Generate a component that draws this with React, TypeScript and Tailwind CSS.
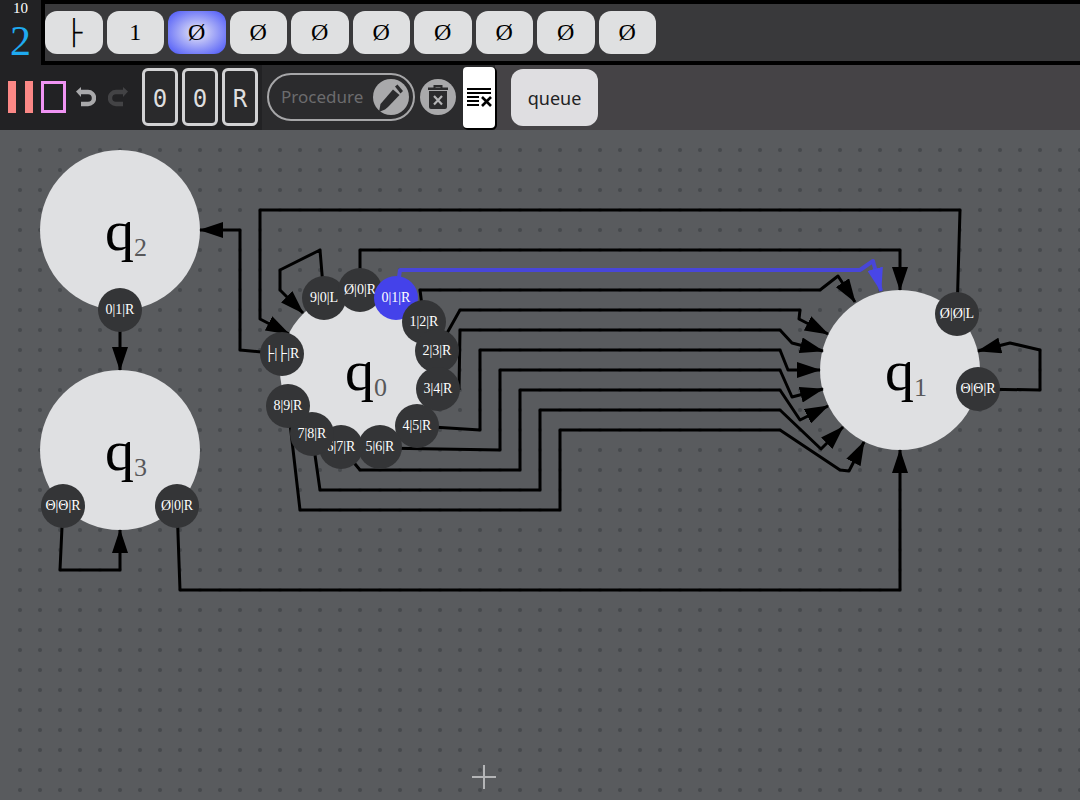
import React from "react";

type Chip = { id: string; label: string; x: number; y: number; active?: boolean };
type State = { id: string; index: number; x: number; y: number };
type Edge = { id: string; d: string; active?: boolean };

const tape = ["├", "1", "Ø", "Ø", "Ø", "Ø", "Ø", "Ø", "Ø", "Ø"];
const headIndex = 2;

const states: State[] = [
  { id: "q2", index: 2, x: 120, y: 100 },
  { id: "q0", index: 0, x: 360, y: 240 },
  { id: "q1", index: 1, x: 900, y: 240 },
  { id: "q3", index: 3, x: 120, y: 320 },
];

const chips: Chip[] = [
  { id: "q2-a", label: "0|1|R", x: 120, y: 180 },
  { id: "q3-a", label: "Θ|Θ|R", x: 63, y: 376 },
  { id: "q3-b", label: "Ø|0|R", x: 177, y: 376 },
  { id: "q0-start", label: "├|├|R", x: 282, y: 224 },
  { id: "q0-9", label: "9|0|L", x: 324, y: 168 },
  { id: "q0-e", label: "Ø|0|R", x: 360, y: 160 },
  { id: "q0-0", label: "0|1|R", x: 396, y: 168, active: true },
  { id: "q0-1", label: "1|2|R", x: 424, y: 192 },
  { id: "q0-2", label: "2|3|R", x: 437, y: 221 },
  { id: "q0-3", label: "3|4|R", x: 438, y: 259 },
  { id: "q0-4", label: "4|5|R", x: 417, y: 296 },
  { id: "q0-5", label: "5|6|R", x: 380, y: 317 },
  { id: "q0-6", label: "6|7|R", x: 341, y: 317 },
  { id: "q0-7", label: "7|8|R", x: 312, y: 304 },
  { id: "q0-8", label: "8|9|R", x: 288, y: 276 },
  { id: "q1-a", label: "Ø|Ø|L", x: 957, y: 184 },
  { id: "q1-b", label: "Θ|Θ|R", x: 978, y: 259 },
];

const edges: Edge[] = [
  { id: "start", d: "M281 224L240 220V100H200" },
  { id: "e9", d: "M324 168L320 120L280 140V160L303 183" },
  { id: "ee", d: "M360 160V120H900V160" },
  { id: "e1", d: "M424 192L420 160H820L838 146L855 172" },
  { id: "e2", d: "M437 221L460 180H800L799 189L828 204" },
  { id: "e3", d: "M459 260L460 200H780L792 213L823 221" },
  { id: "e4", d: "M417 296L480 300V220H780L788 240H820" },
  { id: "e5", d: "M379 318L500 320V240H780L792 267L823 259" },
  { id: "e6", d: "M341 317L360 340H520V260H780L800 290L828 276" },
  { id: "e7", d: "M312 304L320 360H540V280H780L821 319L843 297" },
  { id: "e8", d: "M288 276L300 380H560V300H780L840 340L849 341L864 312" },
  { id: "q1l", d: "M957 184L960 80H260V189L289 204" },
  { id: "q1r", d: "M977 259L1040 260V220L1010 213L978 221" },
  { id: "q2", d: "M120 180V240" },
  { id: "q3a", d: "M63 376L60 440H120V400" },
  { id: "q3b", d: "M177 376L180 460H900V320" },
  { id: "e0", d: "M396 168L400 140H860L873 131L881 161", active: true },
];

function TapeBar() {
  return (
    <header className="flex h-[65px] bg-[#222224]">
      <div className="flex w-[41px] shrink-0 flex-col items-center font-['Liberation_Serif',serif]">
        <span className="text-[15px] leading-[17px] text-white">10</span>
        <span className="text-[42px] leading-[48px] text-[#1faaf0]">2</span>
      </div>
      <div className="flex min-w-0 grow items-center overflow-hidden border-4 border-r-0 border-black bg-[#39393b]">
        <div className="grid w-[611px] shrink-0 grid-cols-10 gap-1">
          {tape.map((symbol, i) => (
            <button
              key={i}
              type="button"
              className={
                "h-[43px] rounded-xl pb-0.5 text-center font-['Liberation_Serif','DejaVu_Sans',serif] text-2xl text-black " +
                (i === headIndex
                  ? "bg-[radial-gradient(ellipse_at_center,#e2e2f6_5%,#5560f8_90%)]"
                  : "bg-[#dfe0e1]")
              }
            >
              {symbol}
            </button>
          ))}
        </div>
      </div>
    </header>
  );
}

function Toolbar() {
  return (
    <div className="flex h-[65px] bg-[#454346]">
      <div className="flex items-center bg-[#222224] pb-0.5 pl-2">
        <button type="button" aria-label="Pause" className="flex h-8 w-[25px] justify-between">
          <span className="h-8 w-2 bg-[#fb8886]" />
          <span className="h-8 w-2 bg-[#fb8886]" />
        </button>
        <button type="button" aria-label="Stop" className="ml-2 h-8 w-[25px] border-3 border-[#f094f4]" />
        <button type="button" aria-label="Undo" className="ml-2.5">
          <svg width="20" height="20" viewBox="0 0 20 20" className="block">
            <path d="M4 5H12A6 6 0 0 1 12 17H5" fill="none" stroke="#a9a9ab" strokeWidth="4.4" />
            <path d="M0 4.5L5 0V10Z" fill="#a9a9ab" />
          </svg>
        </button>
        <button type="button" aria-label="Redo" className="ml-3">
          <svg width="20" height="20" viewBox="0 0 20 20" className="block">
            <path d="M16 5H8A6 6 0 0 0 8 17H15" fill="none" stroke="#434345" strokeWidth="4.4" />
            <path d="M20 4.5L15 0V10Z" fill="#434345" />
          </svg>
        </button>
        <div className="ml-3.5 flex gap-1 pr-1">
          {["0", "0", "R"].map((v, i) => (
            <button
              key={i}
              type="button"
              className="h-[58px] w-9 rounded-md border-3 border-[#d2d2d4] bg-[#2a2a2c] pt-1 text-center font-['DejaVu_Sans_Mono',monospace] text-2xl text-[#dededf]"
            >
              {v}
            </button>
          ))}
        </div>
      </div>
      <div className="flex items-center bg-[#2b2b2d] pl-[5px]">
        <label className="mb-0.5 flex h-12 w-[148px] items-center rounded-full border-2 border-[#a6a6a8] pl-3 pr-1">
          <input
            aria-label="Procedure"
            placeholder="Procedure"
            className="w-0 min-w-0 grow bg-transparent font-['Noto_Sans',sans-serif] text-[17px] text-[#dededf] outline-none placeholder:text-[#6c6c6e]"
          />
          <button type="button" aria-label="Edit procedure" className="size-9 shrink-0 rounded-full bg-[#a9a9ab]">
            <svg viewBox="0 0 36 36" className="block size-9" fill="#2b2b2d">
              <path d="M6 33L7.5 25L20 10.5L26.5 16L15 28L12 30.5Z" />
              <path d="M22 7.5L24.5 5.5L30 12L27.5 14.5Z" />
            </svg>
          </button>
        </label>
        <button type="button" aria-label="Delete procedure" className="mb-0.5 ml-[5px] size-9 shrink-0 rounded-full bg-[#a9a9ab]">
          <svg viewBox="0 0 36 36" className="block size-9">
            <path d="M8 8.5H28V11H8ZM9 12H27V28Q27 30 25 30H11Q9 30 9 28Z" fill="#2b2b2d" />
            <path d="M14.5 9V7H21.5V9" fill="none" stroke="#2b2b2d" strokeWidth="2" />
            <path d="M14 17L22 25.5M22 17L14 25.5" stroke="#b4b4b6" strokeWidth="2.2" />
          </svg>
        </button>
        <button
          type="button"
          aria-label="Clear queue"
          className="ml-[7px] h-[61px] w-8 shrink-0 rounded-sm bg-white shadow-[1px_1px_0_1px_#000]"
        >
          <svg viewBox="0 0 32 61" className="block h-[61px] w-8" stroke="#000" fill="none">
            <path d="M4 22H28M4 26H28M4 30H16M4 34H16M4 38H16" strokeWidth="2" />
            <path d="M19 30L28 39M28 30L19 39" strokeWidth="2.6" />
          </svg>
        </button>
      </div>
      <div className="flex items-center pl-4">
        <button
          type="button"
          className="h-[57px] w-[87px] rounded-xl bg-[#dfdee1] font-['Noto_Sans',sans-serif] text-lg text-[#222224]"
        >
          queue
        </button>
      </div>
    </div>
  );
}

function Arrow({ id, color }: { id: string; color: string }) {
  return (
    <marker id={id} markerUnits="userSpaceOnUse" markerWidth="24" markerHeight="16" refX="23" refY="8" orient="auto">
      <path d="M0 0L24 8L0 16Z" fill={color} />
    </marker>
  );
}

function Diagram() {
  return (
    <main className="relative grow overflow-hidden bg-[#595b5e] font-['Liberation_Serif','DejaVu_Sans',serif]">
      <div className="absolute top-2.5 right-0 bottom-0 left-2.5 bg-[radial-gradient(circle_at_center,#474a4d_1.5px,transparent_2.5px)] bg-size-[20px_20px]" />
      {states.map((s) => (
        <div key={s.id} className="absolute" style={{ left: s.x, top: s.y }}>
          <div className="-mt-20 -ml-20 size-40 rounded-full bg-[#dfe0e2]" />
        </div>
      ))}
      <svg className="absolute inset-0 h-full w-full" fill="none">
        <defs>
          <Arrow id="arrow" color="#000" />
          <Arrow id="arrow-active" color="#4846e8" />
        </defs>
        {edges.map((e) => (
          <path
            key={e.id}
            d={e.d}
            stroke={e.active ? "#4846d8" : "#000"}
            strokeWidth={e.active ? 4 : 3}
            strokeLinejoin="round"
            markerEnd={e.active ? "url(#arrow-active)" : "url(#arrow)"}
          />
        ))}
        <path d="M484 635V659M472 647H496" stroke="#b4b5b7" strokeWidth="2" />
      </svg>
      {states.map((s) => (
        <div key={s.id} className="absolute" style={{ left: s.x, top: s.y }}>
          <div className="-mt-8 -ml-[15px] flex items-start text-black">
            <span className="text-[58px] leading-[66px]">q</span>
            <sub className="bottom-0 pt-[34px] text-[26px] leading-8 text-[#58585a]">{s.index}</sub>
          </div>
        </div>
      ))}
      {chips.map((c) => (
        <div key={c.id} className="absolute" style={{ left: c.x, top: c.y }}>
          <button
            type="button"
            className={
              "-mt-[22px] -ml-[22px] flex size-11 items-center justify-center rounded-full text-sm whitespace-nowrap text-white " +
              (c.active ? "bg-[#4442ea]" : "bg-[#343537]")
            }
          >
            {c.label}
          </button>
        </div>
      ))}
    </main>
  );
}

export default function App() {
  return (
    <div className="flex min-h-screen flex-col">
      <TapeBar />
      <Toolbar />
      <Diagram />
    </div>
  );
}
